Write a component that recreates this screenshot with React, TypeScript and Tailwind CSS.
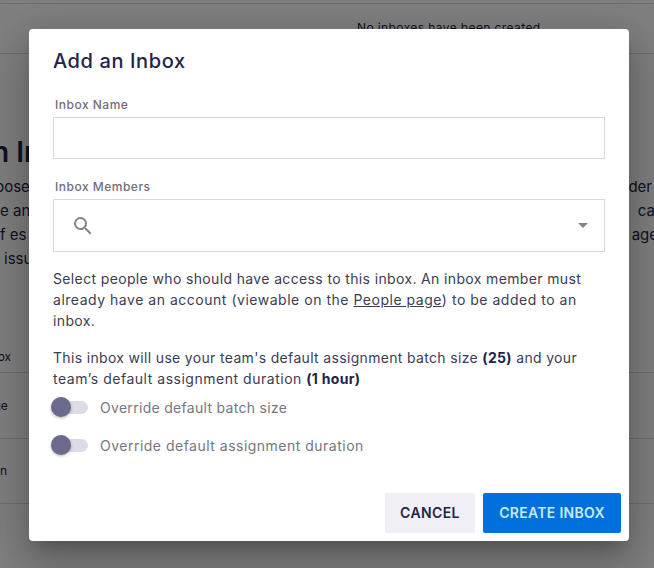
const font = 'font-["Inter","Liberation_Sans",sans-serif]';

const backgroundRows = [
  { left: 'Inbox', className: 'h-[66px] items-end pb-[6px]', offset: 'ml-[-20px]' },
  { left: 'Manage', className: 'h-[66px] items-center', offset: 'ml-[-38px]' },
  { left: 'Admin', className: 'h-[65px] items-center', offset: 'ml-[-29px]' },
];

// one switch row in the "off" state
function OverrideToggle({ label, tracking }: { label: string; tracking: string }) {
  return (
    <div className="flex h-[38px] items-center">
      <div className="relative ml-[1px] h-[13px] w-[34px] rounded-full bg-[#dcdbe6]">
        <div className="absolute left-[-3px] top-[-4px] h-5 w-5 rounded-full bg-[#6b6a8d] shadow-[0_1px_3px_rgba(0,0,0,0.3)]" />
      </div>
      <span className={`ml-[12px] text-[14px] text-[#77767f] ${tracking}`}>{label}</span>
    </div>
  );
}

export default function App() {
  return (
    <div className={`relative h-[568px] w-[654px] overflow-hidden bg-white ${font}`}>
      {/* page behind the dialog */}
      <div className="text-[15px] text-[#23234a]">
        <div className="h-[4px] border-b border-[#d8d8d8]" />
        <div className="flex h-[50px] items-start border-b border-[#d8d8d8] pl-[357px] pt-[15px] text-[12px] tracking-[0.4px] whitespace-nowrap">
          No inboxes have been created
        </div>
        <div className="mt-[80px] flex h-[36px] items-center text-[28px] font-semibold whitespace-nowrap">
          <span className="ml-[-8px]">n Inbox</span>
        </div>
        <div className="mt-[5px] flex flex-col leading-[24px] whitespace-pre">
          <div className="flex justify-between"><span className="ml-[-5px]">pose</span><span className="mr-[2px]">der</span></div>
          <div className="flex justify-between"><span>e an</span><span className="mr-[-1px]">ca</span></div>
          <div className="flex justify-between"><span>f es</span><span className="mr-[-4px]">age</span></div>
          <div className="flex justify-between"><span className="ml-[4px]">issu</span></div>
        </div>
        <div className="mt-[36px]">
          {backgroundRows.map((row) => (
            <div key={row.left} className={`flex ${row.className} border-b border-[#d8d8d8] text-[12px]`}>
              <span className={row.offset}>{row.left}</span>
            </div>
          ))}
        </div>
      </div>

      {/* overlay */}
      <div className="absolute inset-0 bg-black/50" />

      {/* dialog */}
      <div className="absolute left-[29px] top-[29px] flex h-[512px] w-[600px] flex-col rounded-[4px] bg-white px-6 pt-[18px] shadow-[0_11px_15px_-7px_rgba(0,0,0,0.2),0_24px_38px_3px_rgba(0,0,0,0.14),0_9px_46px_8px_rgba(0,0,0,0.12)]">
        <h2 className="text-[20px] leading-[28px] font-medium text-[#23234a] tracking-[0.6px]">Add an Inbox</h2>

        <label className="mt-[21px] ml-[2px] text-[12px] leading-[18px] font-medium text-[#6f6e7c] tracking-[0.5px]">Inbox Name</label>
        <div className="mt-[3px] h-[42px] border border-[#d9d9d9]" />

        <label className="mt-[19px] ml-[2px] text-[12px] leading-[18px] font-medium text-[#6f6e7c] tracking-[0.5px]">Inbox Members</label>
        <div className="mt-[3px] flex h-[53px] items-center justify-between border border-[#d9d9d9] pl-[17px] pr-[16px]">
          <svg width="24" height="24" viewBox="0 0 24 24" fill="#858585">
            <path d="M15.5 14h-.79l-.28-.27A6.47 6.47 0 0 0 16 9.5 6.5 6.5 0 1 0 9.5 16c1.61 0 3.09-.59 4.23-1.57l.27.28v.79l5 4.99L20.49 19l-4.99-5zm-6 0C7.01 14 5 11.99 5 9.5S7.01 5 9.5 5 14 7.01 14 9.5 11.99 14 9.5 14z" />
          </svg>
          <svg width="10" height="5" viewBox="0 0 10 5"><path d="M0 0h10L5 5z" fill="#858585" /></svg>
        </div>

        <p className="mt-[16px] text-[14px] leading-[21px] text-[#3c3c55] tracking-[0.36px]">
          Select people who should have access to this inbox. An inbox member must <span className="tracking-[0.52px]">already have an account (viewable on the <span className="underline">People page</span>) to be added to an</span> inbox.
        </p>
        <p className="mt-[16px] text-[14px] leading-[21px] text-[#3c3c55] tracking-[0.33px]">
          This inbox will use your team's default assignment batch size <b className="font-bold text-[#23234a]">(25)</b> and your <span className="tracking-[0.52px]">team’s default assignment duration</span> <b className="font-bold text-[#23234a]">(1 hour)</b>
        </p>

        <div className="mt-[-1px] flex flex-col">
          <OverrideToggle label="Override default batch size" tracking="tracking-[0.3px]" />
          <OverrideToggle label="Override default assignment duration" tracking="tracking-[0.49px]" />
        </div>

        <div className="mr-[-16px] mt-auto mb-[8px] flex justify-end gap-2">
          <button className="h-10 w-[90px] rounded-[2px] bg-[#efeff5] pb-px text-[14px] font-semibold tracking-[0.4px] text-[#23234a]">CANCEL</button>
          <button className="h-10 w-[138px] rounded-[2px] bg-[#0071dc] pb-px text-[14px] font-semibold tracking-[0.3px] text-[#c4ebff]">CREATE INBOX</button>
        </div>
      </div>
    </div>
  );
}
